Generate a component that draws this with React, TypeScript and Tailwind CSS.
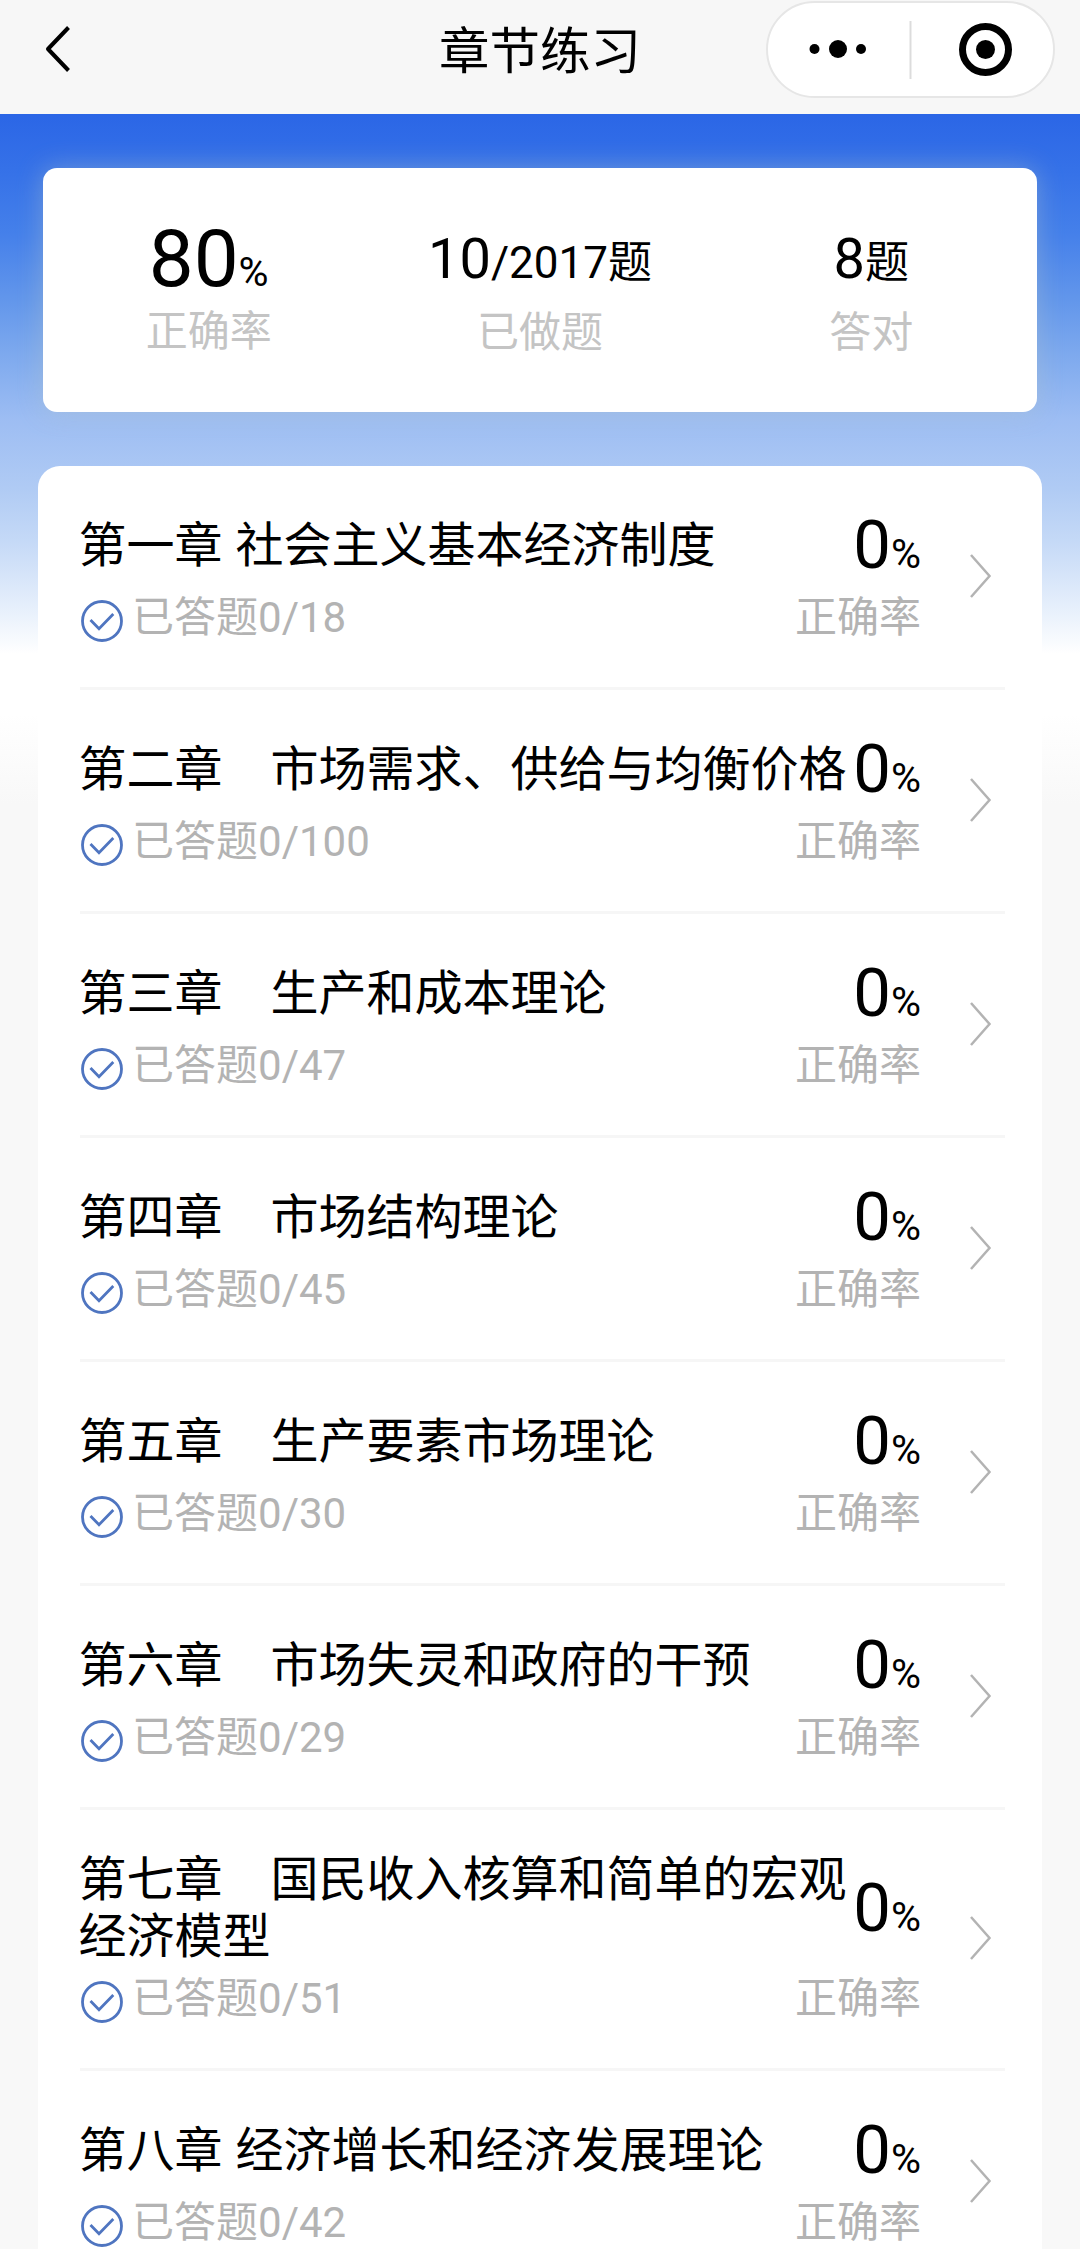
const chapters = [
  { title: '第一章 社会主义基本经济制度', done: 0, total: 18, rate: 0 },
  { title: '第二章　市场需求、供给与均衡价格', done: 0, total: 100, rate: 0 },
  { title: '第三章　生产和成本理论', done: 0, total: 47, rate: 0 },
  { title: '第四章　市场结构理论', done: 0, total: 45, rate: 0 },
  { title: '第五章　生产要素市场理论', done: 0, total: 30, rate: 0 },
  { title: '第六章　市场失灵和政府的干预', done: 0, total: 29, rate: 0 },
  { title: '第七章　国民收入核算和简单的宏观经济模型', done: 0, total: 51, rate: 0 },
  { title: '第八章 经济增长和经济发展理论', done: 0, total: 42, rate: 0 },
];

function Header() {
  return (
    <header className="flex h-[114px] items-start bg-[#f7f7f7]">
      <div className="flex h-[98px] w-[360px] items-center pl-[44px]">
        <svg width="28" height="50" viewBox="0 0 28 50" fill="none">
          <path d="M24.5 3.5L4 25l20.5 21.5" stroke="#000" strokeWidth="4" strokeLinejoin="round" />
        </svg>
      </div>
      <h1 className="h-[98px] w-[360px] text-center text-[50.5px] leading-[103px]">章节练习</h1>
      <div className="flex w-[360px] justify-end pt-px pr-[25px]">
        <div className="flex h-[97px] w-[289px] items-center rounded-full border-2 border-[#e6e6e6] bg-white">
          <svg width="285" height="93" viewBox="0 0 285 93">
            <circle cx="46.5" cy="46" r="5" />
            <circle cx="70" cy="46" r="9" />
            <circle cx="93" cy="46" r="5" />
            <path d="M142.5 18v58" stroke="#dcdcdc" strokeWidth="2" />
            <circle cx="217.5" cy="46.5" r="23" fill="none" stroke="#000" strokeWidth="7" />
            <circle cx="217.5" cy="46.5" r="9.5" />
          </svg>
        </div>
      </div>
    </header>
  );
}

function Summary() {
  return (
    <section className="mx-[43px] grid h-[244px] grid-cols-3 rounded-[14px] bg-white text-center shadow-[0_0_26px_rgba(175,195,200,0.45)]">
      <div className="pt-[45px]">
        <p className="h-[92px] text-[80px] leading-[92px]">
          80<span className="text-[41px]">%</span>
        </p>
        <p className="mt-0.5 text-[42px] leading-[50px] text-[#c4c4c4]">正确率</p>
      </div>
      <div className="pt-[58px]">
        <p className="h-[66px] text-[44px] leading-[66px]">
          <span className="text-[56px]">10</span>/2017题
        </p>
        <p className="mt-4 text-[42px] leading-[50px] text-[#c4c4c4]">已做题</p>
      </div>
      <div className="pt-[58px]">
        <p className="h-[66px] text-[44px] leading-[66px]">
          <span className="text-[56px]">8</span>题
        </p>
        <p className="mt-4 text-[42px] leading-[50px] text-[#c4c4c4]">答对</p>
      </div>
    </section>
  );
}

function CheckIcon() {
  return (
    <svg width="42" height="42" viewBox="0 0 42 42" fill="none" stroke="#4f75c0" strokeWidth="2.8">
      <circle cx="21" cy="21" r="19.5" />
      <path d="M9.5 20l8.5 8.7L32.3 14" />
    </svg>
  );
}

function ChapterRow({ chapter }: { chapter: (typeof chapters)[number] }) {
  return (
    <li className="flex items-center border-b-[3px] border-[#f6f6f6] pt-10 pb-[46px]">
      <div className="w-[841px]">
        <div className="flex min-h-[77px] items-center justify-between">
          <h2 className="-mb-px -ml-[1.5px] w-[772px] pt-px text-[48px] leading-[57px] [word-spacing:1px]">{chapter.title}</h2>
          <p className="h-[77px] text-[67px] leading-[79px] whitespace-nowrap">
            {chapter.rate}<span className="text-[41px] leading-none">%</span>
          </p>
        </div>
        <div className="mt-2 flex h-[50px] items-center justify-between text-[42px] leading-[50px] text-[#b3b3b3]">
          <div className="flex items-center">
            <div className="pt-[9px] pl-px"><CheckIcon /></div>
            <span className="ml-[9px] pt-[3px]">已答题{chapter.done}/{chapter.total}</span>
          </div>
          <span className="pt-[3px]">正确率</span>
        </div>
      </div>
      <svg className="ml-[48px] mt-[4px]" width="24" height="46" viewBox="0 0 24 46" fill="none">
        <path d="M2 2l18.5 21L2 44" stroke="#b3b3b3" strokeWidth="2.5" />
      </svg>
    </li>
  );
}

export default function App() {
  return (
    <div className="h-[2249px] w-[1080px] overflow-hidden bg-[#f8f8f8] font-[Roboto,'Noto_Sans_CJK_SC',sans-serif] text-black">
      <Header />
      <main className="bg-[linear-gradient(180deg,#2b66e6_0px,#3672e8_60px,#4580ea_120px,#6296eb_185px,#7da9ee_240px,#9dbdf3_305px,#b0cbf4_375px,#c6daf7_430px,#e4eefb_490px,#ffffff_540px,#ffffff_600px,#f8f8f8_690px)] pt-[54px]">
        <Summary />
        <ul className="mx-[38px] mt-[54px] rounded-t-[22px] bg-white pr-[37px] pl-[42px]">
          {chapters.map((chapter) => (
            <ChapterRow key={chapter.title} chapter={chapter} />
          ))}
        </ul>
      </main>
    </div>
  );
}
